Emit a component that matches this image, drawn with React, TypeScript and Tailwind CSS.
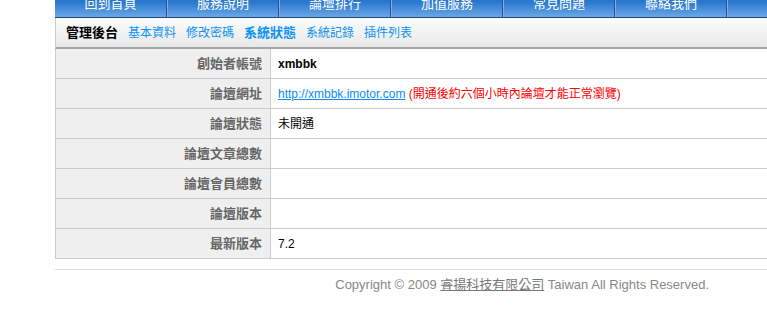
import React from "react";

const navItems = ["回到首頁", "服務說明", "論壇排行", "加值服務", "常見問題", "聯絡我們", ""];
const subItems = ["基本資料", "修改密碼", "系統狀態", "系統記錄", "插件列表"];

const rows: { label: string; value: React.ReactNode }[] = [
  { label: "創始者帳號", value: <span className="font-bold text-black">xmbbk</span> },
  {
    label: "論壇網址",
    value: (
      <span>
        <a href="#" className="text-[#0a8cf0] underline">http://xmbbk.imotor.com</a>{" "}
        <span className="text-[#ff0000]">(開通後約六個小時內論壇才能正常瀏覽)</span>
      </span>
    ),
  },
  { label: "論壇狀態", value: <span className="text-black">未開通</span> },
  { label: "論壇文章總數", value: null },
  { label: "論壇會員總數", value: null },
  { label: "論壇版本", value: null },
  { label: "最新版本", value: <span className="text-black">7.2</span> },
];

export default function App() {
  return (
    <div className="w-[767px] h-[329px] overflow-hidden bg-white font-['Liberation_Sans','Noto_Sans_CJK_TC',sans-serif] text-[12px]">
      <div className="ml-[55px] w-[712px]">
        {/* top nav */}
        <div className="-mt-[10px] h-[28px] flex bg-gradient-to-b from-[#0f5fb8] via-[#2f7dd0] to-[#6aa8e6] border-b border-[#1f4e7e] overflow-hidden">
          {navItems.map((t, i) => (
            <div
              key={i}
              className={`shrink-0 w-[112px] h-full flex items-center justify-center text-white text-[13px] border-r border-[#1d5190] ${i > 0 ? "border-l border-l-[#7fb2e8]" : ""}`}
            >
              {t}
            </div>
          ))}
        </div>
        {/* sub nav */}
        <div className="h-[31px] flex items-center gap-[10px] pl-[10px] pt-[1px] border-l border-[#cccccc] border-b-2 border-b-[#a6a6a6] bg-gradient-to-b from-[#fcfcfc] to-[#e8e8e8]">
          <span className="font-bold text-black text-[13px]">管理後台</span>
          {subItems.map((t) => (
            <a
              key={t}
              href="#"
              className={`text-[#0c93f2] ${t === "系統狀態" ? "font-bold text-[13px]" : "text-[12px]"}`}
            >
              {t}
            </a>
          ))}
        </div>
        {/* table */}
        <div className="border-l border-[#cccccc]">
          {rows.map((r) => (
            <div key={r.label} className="flex h-[30px] border-b border-[#cccccc]">
              <div className="w-[215px] shrink-0 bg-[#efefef] border-r border-[#cccccc] flex items-center justify-end pr-[8px] font-bold text-[#666666] text-[13px]">
                {r.label}
              </div>
              <div className="flex-1 flex items-center pl-[7px] text-[12px]">{r.value}</div>
            </div>
          ))}
        </div>
        {/* footer */}
        <div className="mt-[10px] border-t border-[#dddddd] pt-[5px] flex justify-end pr-[58px] text-[#888888] text-[13px]">
          <span>
            Copyright © 2009 <a href="#" className="underline text-[#777777]">睿揚科技有限公司</a> Taiwan All Rights Reserved.
          </span>
        </div>
      </div>
    </div>
  );
}
